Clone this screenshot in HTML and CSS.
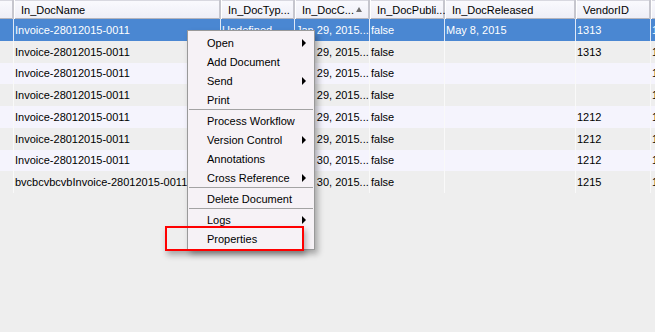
FILE: index.html
```html
<!DOCTYPE html>
<html lang="en">

<head>
    <meta charset="UTF-8">
    <meta name="viewport" content="width=device-width, initial-scale=1.0">
    <title>Documents</title>
    <link rel="stylesheet" href="styles.css">
</head>

<body>

    <!-- Document table -->
    <div class="doc-table">
        <div class="thead">
            <div class="th"></div>
            <div class="th">In_DocName</div>
            <div class="th">In_DocTyp...</div>
            <div class="th sorted">In_DocC...<span class="sort-arrow"></span></div>
            <div class="th">In_DocPubli...</div>
            <div class="th">In_DocReleased</div>
            <div class="th">VendorID</div>
            <div class="th"></div>
        </div>

        <div class="row selected">
            <div class="td"></div>
            <div class="td">Invoice-28012015-0011</div>
            <div class="td">Undefined</div>
            <div class="td">Jan 29, 2015...</div>
            <div class="td">false</div>
            <div class="td">May 8, 2015</div>
            <div class="td">1313</div>
            <div class="td">1</div>
        </div>
        <div class="row">
            <div class="td"></div>
            <div class="td">Invoice-28012015-0011</div>
            <div class="td"></div>
            <div class="td">Jan 29, 2015...</div>
            <div class="td">false</div>
            <div class="td"></div>
            <div class="td">1313</div>
            <div class="td">1</div>
        </div>
        <div class="row">
            <div class="td"></div>
            <div class="td">Invoice-28012015-0011</div>
            <div class="td"></div>
            <div class="td">Jan 29, 2015...</div>
            <div class="td">false</div>
            <div class="td"></div>
            <div class="td"></div>
            <div class="td">1</div>
        </div>
        <div class="row">
            <div class="td"></div>
            <div class="td">Invoice-28012015-0011</div>
            <div class="td"></div>
            <div class="td">Jan 29, 2015...</div>
            <div class="td">false</div>
            <div class="td"></div>
            <div class="td"></div>
            <div class="td">1</div>
        </div>
        <div class="row">
            <div class="td"></div>
            <div class="td">Invoice-28012015-0011</div>
            <div class="td"></div>
            <div class="td">Jan 29, 2015...</div>
            <div class="td">false</div>
            <div class="td"></div>
            <div class="td">1212</div>
            <div class="td">1</div>
        </div>
        <div class="row">
            <div class="td"></div>
            <div class="td">Invoice-28012015-0011</div>
            <div class="td"></div>
            <div class="td">Jan 29, 2015...</div>
            <div class="td">false</div>
            <div class="td"></div>
            <div class="td">1212</div>
            <div class="td">1</div>
        </div>
        <div class="row">
            <div class="td"></div>
            <div class="td">Invoice-28012015-0011</div>
            <div class="td"></div>
            <div class="td">Jan 30, 2015...</div>
            <div class="td">false</div>
            <div class="td"></div>
            <div class="td">1212</div>
            <div class="td">1</div>
        </div>
        <div class="row">
            <div class="td"></div>
            <div class="td">bvcbcvbcvbInvoice-28012015-0011</div>
            <div class="td"></div>
            <div class="td">Jan 30, 2015...</div>
            <div class="td">false</div>
            <div class="td"></div>
            <div class="td">1215</div>
            <div class="td">1</div>
        </div>
    </div>

    <!-- Right-click menu -->
    <div class="context-menu">
        <div class="menu-item has-sub">Open</div>
        <div class="menu-item">Add Document</div>
        <div class="menu-item has-sub">Send</div>
        <div class="menu-item">Print</div>
        <div class="menu-sep"></div>
        <div class="menu-item">Process Workflow</div>
        <div class="menu-item has-sub">Version Control</div>
        <div class="menu-item">Annotations</div>
        <div class="menu-item has-sub">Cross Reference</div>
        <div class="menu-sep"></div>
        <div class="menu-item">Delete Document</div>
        <div class="menu-sep"></div>
        <div class="menu-item has-sub">Logs</div>
        <div class="menu-item">Properties</div>
    </div>

    <!-- Highlight box -->
    <div class="highlight"></div>

</body>

</html>
```

FILE: styles.css
```css
/* Global Styles */
body {
    font-family: "Liberation Sans", Arial, sans-serif;
    font-size: 11px;
    color: #000;
    background-color: #eeeeee;
    margin: 0;
    padding: 0;
    width: 655px;
    height: 332px;
    overflow: hidden;
    position: relative;
}

/* Table */
.doc-table {
    width: 760px;
}

.thead,
.row {
    display: grid;
    grid-template-columns: 14px 207px 74px 75px 75px 131px 75px 109px;
}

/* Header */
.thead {
    height: 19px;
}

.th {
    display: flex;
    align-items: center;
    justify-content: space-between;
    padding-left: 6px;
    padding-right: 8px;
    white-space: nowrap;
    overflow: hidden;
    background: linear-gradient(#fafafe, #eeeef6);
    border-left: 1px solid #ffffff;
    box-shadow: inset -2px 0 0 #c6c6ce, inset 0 -1px 0 #b4b4bc, inset 0 1px 0 #d8d8e0;
}

.th:first-child {
    padding: 0;
    border-left: none;
}

.sort-arrow {
    width: 0;
    height: 0;
    border-left: 3px solid transparent;
    border-right: 3px solid transparent;
    border-bottom: 5px solid #6e6e6e;
    margin-bottom: 1px;
}

/* Rows */
.row {
    height: 21.75px;
    background-color: #f5f4fd;
}

.row:nth-child(odd) {
    background-color: #eeeeee;
}

.row.selected {
    background-color: #4a87d2;
    color: #fff;
}

.td {
    display: flex;
    align-items: center;
    padding-left: 1px;
    white-space: nowrap;
    overflow: hidden;
    border-right: 1px solid #f9f9f9;
}

.row.selected .td {
    border-right-color: #dfe8f6;
}

/* Context Menu */
.context-menu {
    position: absolute;
    left: 187px;
    top: 30px;
    width: 128px;
    height: 220px;
    box-sizing: border-box;
    padding-top: 2px;
    background-color: #f6f2f6;
    border: 1px solid #999;
    box-shadow: 3px 4px 6px rgba(0, 0, 0, 0.3);
}

.menu-item {
    height: 19px;
    display: flex;
    align-items: center;
    justify-content: space-between;
    padding-left: 19px;
    padding-right: 8px;
}

.menu-item.has-sub::after {
    content: "";
    width: 0;
    height: 0;
    border-top: 4px solid transparent;
    border-bottom: 4px solid transparent;
    border-left: 4px solid #000;
}

.menu-sep {
    height: 1px;
    margin: 0 1px 1px 1px;
    background-color: #a3a3a3;
}

/* Red highlight round Properties */
.highlight {
    position: absolute;
    left: 165px;
    top: 226px;
    width: 139px;
    height: 25px;
    box-sizing: border-box;
    border: 2px solid #ff0000;
    box-shadow: 2px 4px 6px rgba(0, 0, 0, 0.3);
}
```
